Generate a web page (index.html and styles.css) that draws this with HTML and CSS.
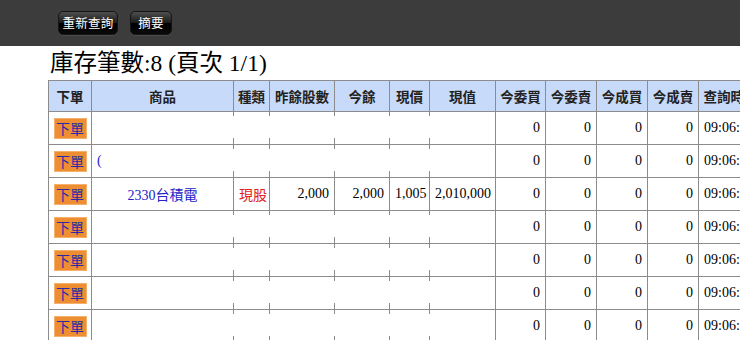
FILE: index.html
```html
<!DOCTYPE html>
<html lang="zh-Hant">
<head>
<meta charset="utf-8">
<title>庫存</title>
<link rel="stylesheet" href="styles.css">
</head>
<body>
<div class="topbar">
  <button class="tbtn w1">重新查詢</button>
  <button class="tbtn w2">摘要</button>
</div>
<div class="main">
  <h1 class="title">庫存筆數:8 (頁次 1/1)</h1>
  <table class="grid">
    <thead>
      <tr>
        <th class="c1">下單</th><th class="c2">商品</th><th class="c3">種類</th><th class="c4">昨餘股數</th><th class="c5">今餘</th><th class="c6">現價</th><th class="c7">現值</th><th class="c8">今委買</th><th class="c9">今委賣</th><th class="c10">今成買</th><th class="c11">今成賣</th><th class="c12">查詢時間</th>
      </tr>
    </thead>
    <tbody>
      <tr><td class="ord"><span class="obtn">下單</span></td><td class="e"></td><td class="e"></td><td class="e"></td><td class="e"></td><td class="e"></td><td></td><td class="n">0</td><td class="n">0</td><td class="n">0</td><td class="n">0</td><td class="t">09:06:32</td></tr>
      <tr><td class="ord"><span class="obtn">下單</span></td><td class="e prod-l">(</td><td class="e"></td><td class="e"></td><td class="e"></td><td class="e"></td><td></td><td class="n">0</td><td class="n">0</td><td class="n">0</td><td class="n">0</td><td class="t">09:06:32</td></tr>
      <tr><td class="ord"><span class="obtn">下單</span></td><td class="prod">2330台積電</td><td class="kind">現股</td><td class="n">2,000</td><td class="n">2,000</td><td class="n">1,005</td><td class="n">2,010,000</td><td class="n">0</td><td class="n">0</td><td class="n">0</td><td class="n">0</td><td class="t">09:06:32</td></tr>
      <tr><td class="ord"><span class="obtn">下單</span></td><td class="e"></td><td class="e"></td><td class="e"></td><td class="e"></td><td class="e"></td><td></td><td class="n">0</td><td class="n">0</td><td class="n">0</td><td class="n">0</td><td class="t">09:06:32</td></tr>
      <tr><td class="ord"><span class="obtn">下單</span></td><td class="e"></td><td class="e"></td><td class="e"></td><td class="e"></td><td class="e"></td><td></td><td class="n">0</td><td class="n">0</td><td class="n">0</td><td class="n">0</td><td class="t">09:06:32</td></tr>
      <tr><td class="ord"><span class="obtn">下單</span></td><td class="e"></td><td class="e"></td><td class="e"></td><td class="e"></td><td class="e"></td><td></td><td class="n">0</td><td class="n">0</td><td class="n">0</td><td class="n">0</td><td class="t">09:06:32</td></tr>
      <tr><td class="ord"><span class="obtn">下單</span></td><td class="e"></td><td class="e"></td><td class="e"></td><td class="e"></td><td class="e"></td><td></td><td class="n">0</td><td class="n">0</td><td class="n">0</td><td class="n">0</td><td class="t">09:06:32</td></tr>
    </tbody>
  </table>
</div>
</body>
</html>
```
FILE: styles.css
```css
html, body {
  margin: 0;
  padding: 0;
  background: #fff;
  overflow: hidden;
  width: 740px;
  height: 340px;
  font-family: "Liberation Serif", "Noto Sans CJK TC", serif;
}
.topbar {
  height: 46px;
  background: #3c3c3c;
  display: flex;
  align-items: center;
  gap: 12px;
  padding-left: 58px;
  box-sizing: border-box;
}
.tbtn {
  height: 24px;
  padding: 0;
  border: 1px solid #151515;
  border-radius: 5px;
  background: linear-gradient(#4e4e4e 0%, #1a1a1a 50%, #000 52%, #0a0a0a 100%);
  color: #fff;
  font-family: "Noto Sans CJK TC", sans-serif;
  font-size: 12.5px;
  letter-spacing: 0.3px;
  line-height: 22px;
  text-align: center;
  box-shadow: 0 1px 0 rgba(255,255,255,0.08);
}
.w1 { width: 60px; }
.w2 { width: 42px; }
.main {
  padding-left: 48px;
}
.title {
  margin: 0;
  padding-left: 2px;
  font-size: 23.5px;
  font-weight: normal;
  line-height: 34px;
  color: #000;
  white-space: nowrap;
}
.grid {
  border-collapse: separate;
  border-spacing: 0;
  table-layout: fixed;
  width: 715px;
  border-left: 1px solid #8c8c8c;
  border-top: 1px solid #8c8c8c;
}
.grid th, .grid td {
  box-sizing: border-box;
  border-right: 1px solid #8c8c8c;
  border-bottom: 1px solid #8c8c8c;
  padding: 0 5px;
  white-space: nowrap;
  overflow: hidden;
}
.grid th {
  height: 31px;
  background: #c7dafa;
  font-family: "Noto Sans CJK TC", sans-serif;
  font-size: 13.5px;
  font-weight: bold;
  color: #222;
  text-align: center;
  padding: 0;
}
.grid td {
  height: 33px;
  font-size: 14px;
  color: #000;
}
.c1 { width: 43px; }
.c2 { width: 142px; }
.c3 { width: 36px; }
.c4 { width: 65px; }
.c5 { width: 55px; }
.c6 { width: 40px; }
.c7 { width: 66px; }
.c8 { width: 50px; }
.c9 { width: 51px; }
.c10 { width: 51px; }
.c11 { width: 51px; }
.c12 { width: 64px; }
.grid td.ord {
  padding: 0;
  text-align: center;
}
.obtn {
  display: inline-block;
  width: 33px;
  height: 21px;
  box-sizing: border-box;
  background: #ee8e33;
  border: 1px solid #f4b06c;
  color: #2b2aa6;
  font-family: "Noto Sans CJK TC", sans-serif;
  font-size: 14px;
  line-height: 19px;
  text-align: center;
  vertical-align: middle;
}
.grid td.e {
  border-right: 0;
  background:
    linear-gradient(#8c8c8c, #8c8c8c) right top / 1px 4px no-repeat,
    linear-gradient(#8c8c8c, #8c8c8c) right bottom / 1px 6px no-repeat;
}
.grid td.n { text-align: right; }
.grid td.t { text-align: left; }
.grid td.prod {
  text-align: center;
  color: #2222c8;
}
.grid td.prod-l {
  text-align: left;
  color: #2222c8;
}
.grid td.kind {
  text-align: center;
  color: #e0201c;
  font-family: "Noto Sans CJK TC", sans-serif;
}
```
